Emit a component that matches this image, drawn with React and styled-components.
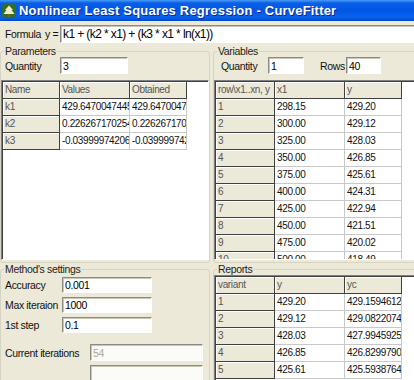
import React from 'react'
import styled, { createGlobalStyle, css } from 'styled-components'

const GlobalStyle = createGlobalStyle`
  html, body {
    margin: 0;
    padding: 0;
    background: #ece9d8;
  }
  * {
    box-sizing: border-box;
  }
`

const uiFont = `"Liberation Sans", Arial, sans-serif`

const params = [
  ['k1', '429.64700474456', '429.64700474456'],
  ['k2', '0.226267170254', '0.226267170254'],
  ['k3', '-0.039999742063', '-0.039999742063'],
]

const variables = [
  ['1', '298.15', '429.20'],
  ['2', '300.00', '429.12'],
  ['3', '325.00', '428.03'],
  ['4', '350.00', '426.85'],
  ['5', '375.00', '425.61'],
  ['6', '400.00', '424.31'],
  ['7', '425.00', '422.94'],
  ['8', '450.00', '421.51'],
  ['9', '475.00', '420.02'],
  ['10', '500.00', '418.49'],
]

const reports = [
  ['1', '429.20', '429.15946121'],
  ['2', '429.12', '429.08220743'],
  ['3', '428.03', '427.99459257'],
  ['4', '426.85', '426.82997905'],
  ['5', '425.61', '425.59387641'],
]

function AppIcon() {
  return (
    <svg width="14" height="14" viewBox="0 0 14 14">
      <rect x="0" y="0" width="14" height="14" rx="2" fill="#2f6f2c" />
      <polygon points="7,1.5 11,6 9.5,6 12.5,10 1.5,10 4.5,6 3,6" fill="#f3ecc0" />
      <rect x="6" y="10" width="2" height="3" fill="#8a5a20" />
    </svg>
  )
}

function DataGrid({ cols, height, head, rows }) {
  return (
    <Grid $h={height}>
      <Table $cols={cols}>
        {head.map((h, i) => (
          <Cell key={'h' + i} $fixed>{h}</Cell>
        ))}
        {rows.map((r, ri) =>
          r.map((v, ci) => (
            <Cell key={ri + '-' + ci} $fixed={ci === 0}>{v}</Cell>
          ))
        )}
      </Table>
    </Grid>
  )
}

export default function App() {
  return (
    <>
      <GlobalStyle />
      <Window>
        <TitleBar>
          <AppIcon />
          <TitleText>Nonlinear Least Squares Regression - CurveFitter</TitleText>
        </TitleBar>

        <FormulaBar>
          <FormulaLabel>
            <span>Formula</span>
            <span>y =</span>
          </FormulaLabel>
          <FormulaInput readOnly value="k1 + (k2 * x1) + (k3 * x1 * ln(x1))" />
        </FormulaBar>

        <Body>
          <Column>
            <GroupBox $h={218}>
              <Legend>Parameters</Legend>
              <FieldRow $pl={4}>
                <Label $w={55}>Quantity</Label>
                <Field $w={68} readOnly value="3" />
              </FieldRow>
              <DataGrid
                cols="57px 70px 57px"
                height={180}
                head={['Name', 'Values', 'Obtained']}
                rows={params}
              />
            </GroupBox>

            <GroupBox $h={130}>
              <Legend>Method's settings</Legend>
              <Settings>
                <FieldRow $pl={4}>
                  <Label $w={57}>Accuracy</Label>
                  <Field $w={90} $h={16} readOnly value="0.001" />
                </FieldRow>
                <FieldRow $pl={4}>
                  <Label $w={57}>Max iteraion</Label>
                  <Field $w={90} $h={16} readOnly value="1000" />
                </FieldRow>
                <FieldRow $pl={4}>
                  <Label $w={57}>1st step</Label>
                  <Field $w={90} $h={16} readOnly value="0.1" />
                </FieldRow>
                <FieldRow $pl={4} $mt={7}>
                  <Label $w={85}>Current iterations</Label>
                  <Field $w={113} disabled value="54" />
                </FieldRow>
                <FieldRow $pl={4}>
                  <Label $w={85}></Label>
                  <Field $w={113} disabled value="" />
                </FieldRow>
              </Settings>
            </GroupBox>
          </Column>

          <Column>
            <GroupBox $h={218}>
              <Legend>Variables</Legend>
              <FieldRow $pl={7}>
                <Label $w={47}>Quantity</Label>
                <Field $w={36} readOnly value="1" />
                <Label $w={26} $ml={16}>Rows</Label>
                <Field $w={35} readOnly value="40" />
              </FieldRow>
              <DataGrid
                cols="59px 70px 57px"
                height={180}
                head={['row\\x1..xn, y', 'x1', 'y']}
                rows={variables}
              />
            </GroupBox>

            <GroupBox $h={130}>
              <Legend>Reports</Legend>
              <DataGrid
                cols="59px 70px 57px"
                height={110}
                head={['variant', 'y', 'yc']}
                rows={reports}
              />
            </GroupBox>
          </Column>
        </Body>
      </Window>
    </>
  )
}

const Window = styled.div`
  width: 414px;
  height: 380px;
  overflow: hidden;
  background: #ece9d8;
  font-family: ${uiFont};
  font-size: 10px;
  letter-spacing: -0.35px;
  color: #111;
`

const TitleBar = styled.div`
  height: 21px;
  display: flex;
  align-items: center;
  gap: 3px;
  padding-left: 2px;
  background: linear-gradient(
    to bottom,
    #4a9af8 0px,
    #0a5fe8 3px,
    #0056e4 10px,
    #0a62f0 17px,
    #0048c8 21px
  );
`

const TitleText = styled.div`
  font-weight: bold;
  font-size: 13px;
  letter-spacing: 0.2px;
  color: #fff;
  text-shadow: 1px 1px 0 #0b2a8c;
  white-space: nowrap;
`

const FormulaBar = styled.div`
  display: flex;
  align-items: center;
  height: 24px;
  padding: 4px 0 2px 5px;
`

const FormulaLabel = styled.div`
  width: 55px;
  display: flex;
  gap: 4px;
  font-size: 10.5px;
  white-space: nowrap;
`

const FormulaInput = styled.input`
  flex: 1;
  height: 18px;
  margin-right: -4px;
  padding: 0 2px;
  border: 1px solid;
  border-color: #8d8b80 #fff #fff #8d8b80;
  box-shadow: inset 1px 1px 0 #c9c6b7;
  background: #fff;
  font-family: ${uiFont};
  font-size: 12px;
  letter-spacing: -0.6px;
  color: #000;
  outline: none;
`

const Body = styled.div`
  display: grid;
  grid-template-columns: 210px 216px;
  column-gap: 3px;
`

const Column = styled.div`
  display: flex;
  flex-direction: column;
`

const GroupBox = styled.fieldset`
  margin: 0;
  padding: 0;
  min-width: 0;
  height: ${p => p.$h}px;
  border: 1px solid #d6d3c2;
  border-radius: 3px;
  display: flex;
  flex-direction: column;
  gap: 6px;
`

const Legend = styled.legend`
  margin-left: 3px;
  padding: 0 1px;
  line-height: 12px;
  font-size: 10.5px;
  color: #222;
`

const FieldRow = styled.div`
  display: flex;
  align-items: center;
  padding-left: ${p => p.$pl || 0}px;
  margin-top: ${p => p.$mt || 0}px;
  flex-shrink: 0;
`

const Settings = styled.div`
  display: flex;
  flex-direction: column;
  gap: 4px;
  padding-top: 2px;
`

const Label = styled.span`
  width: ${p => p.$w}px;
  margin-left: ${p => p.$ml || 0}px;
  font-size: 10.5px;
  white-space: nowrap;
  color: #111;
`

const Field = styled.input`
  width: ${p => p.$w}px;
  height: ${p => p.$h || 17}px;
  padding: 0 2px;
  border: 1px solid;
  border-color: #8d8b80 #fff #fff #8d8b80;
  box-shadow: inset 1px 1px 0 #c9c6b7;
  background: #fff;
  font-family: ${uiFont};
  font-size: 10.5px;
  letter-spacing: -0.35px;
  color: #000;
  outline: none;

  &:disabled {
    color: #aca899;
    background: #fbfbf8;
  }
`

const Grid = styled.div`
  height: ${p => p.$h}px;
  flex-shrink: 0;
  overflow: hidden;
  background: #fff;
  border: 1px solid;
  border-color: #808080 #fff #fff #808080;
  box-shadow: inset 1px 1px 0 #404040;
  padding: 1px 0 0 1px;
`

const Table = styled.div`
  display: grid;
  grid-template-columns: ${p => p.$cols};
  grid-auto-rows: 17px;
`

const Cell = styled.div`
  padding: 0 2px;
  line-height: 16px;
  white-space: nowrap;
  overflow: hidden;
  color: #111;
  border-right: 1px solid #c8c8c8;
  border-bottom: 1px solid #c8c8c8;

  ${p => p.$fixed && css`
    background: #ece9d8;
    color: #555;
    border-right-color: #404040;
    border-bottom-color: #404040;
    box-shadow: inset 1px 1px 0 #fff;
  `}
`
